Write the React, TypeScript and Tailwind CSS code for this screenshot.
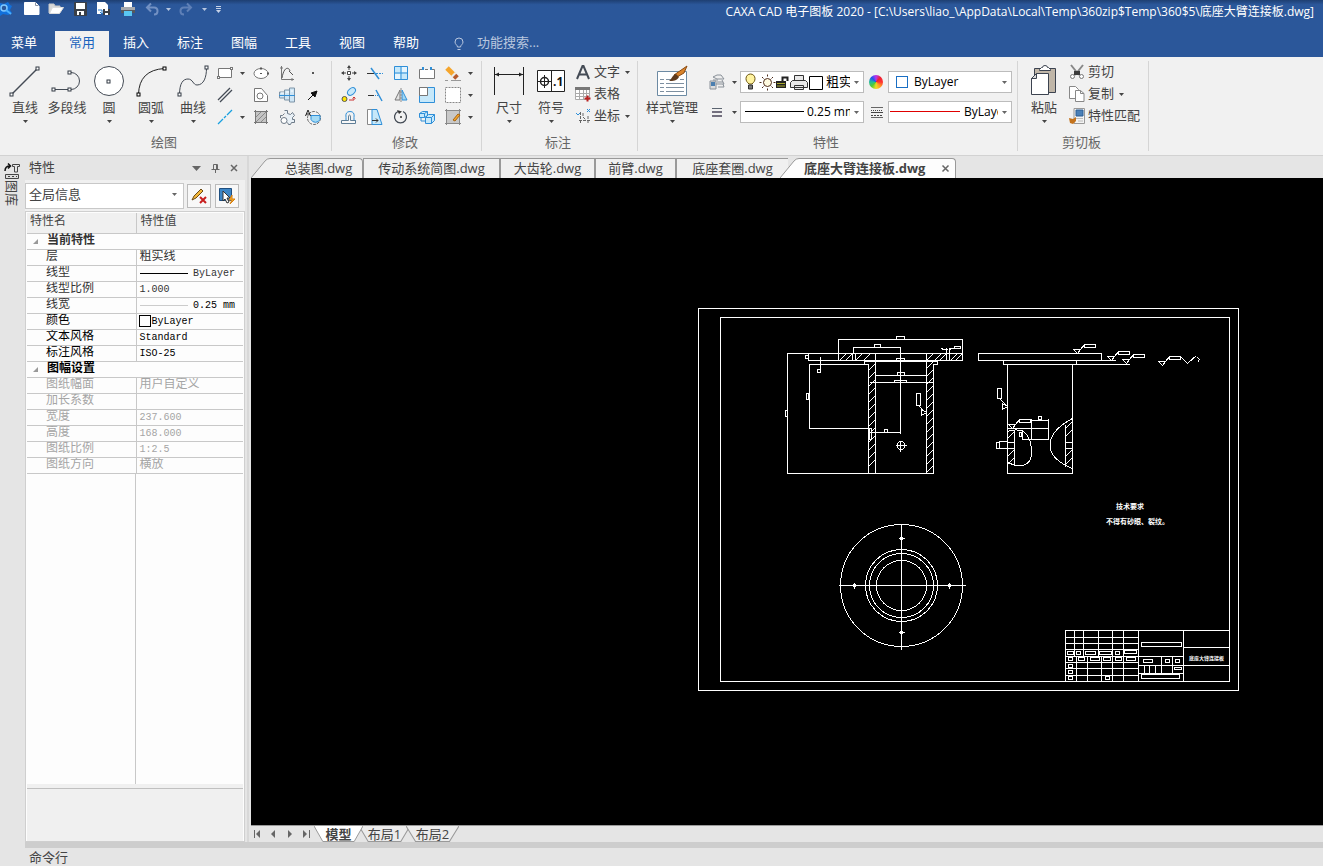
import React from 'react';

interface IconProps {
  w?: number;
  h?: number;
  children: React.ReactNode;
}

const Icon: React.FC<IconProps> = ({ w = 16, h = 16, children }) => (
  <svg width={w} height={h} viewBox={`0 0 ${w} ${h}`} fill="none" stroke="#5b6470" strokeWidth={1} className="shrink-0" aria-hidden="true">
    {children}
  </svg>
);

const Caret: React.FC<{ className?: string }> = ({ className = 'text-[#444]' }) => (
  <svg width="5" height="3" viewBox="0 0 5 3" className={`shrink-0 ${className}`} aria-hidden="true">
    <path d="M0 0h5L2.5 3z" fill="currentColor" />
  </svg>
);

// Square grip drawn at the ends of the sketch icons
const Grip: React.FC<{ x: number; y: number; c?: string }> = ({ x, y, c = '#333a45' }) => (
  <rect x={x - 1.5} y={y - 1.5} width="3" height="3" fill="#fff" stroke={c} />
);

/* ---------- quick access ---------- */

const quickItems = [
  { label: '新建', cell: 'w-6', icon: <Icon><path d="M.5 1.5h11l3.5 3.5v8.5H.5z" fill="#fff" stroke="#fff" /><path d="M11.5 1.5v3h3" stroke="#8a93a3" /></Icon> },
  { label: '打开', cell: 'w-6', icon: <Icon><path d="M1 12V3h5l1 2h5v2" fill="#d8d8d8" stroke="#c9c9c9" /><path d="M1.5 12.5l3-6h11l-4 6z" fill="#fff" stroke="#ddd" /></Icon> },
  { label: '保存', cell: 'w-6', icon: <Icon><path d="M2.5 1.5h12v13h-12z" fill="#3a3f47" stroke="#3a3f47" /><path d="M4 2h9v6H4zM5 10h7v4H5z" fill="#fff" stroke="none" /><path d="M7 11h2v3H7z" fill="#3a3f47" stroke="none" /></Icon> },
  { label: '另存为', cell: 'w-6', icon: <Icon><path d="M1 1h8l3 3v9H1z" fill="#fff" stroke="none" /><path d="M2 9h4v3M4 11l2 2 2-2" stroke="#2678c9" /><path d="M7 8h7v6H7z" fill="#3a3f47" stroke="none" /><path d="M9 8h3v2H9zM9 12h3v2H9z" fill="#fff" stroke="none" /></Icon> },
  { label: '打印', cell: 'w-6', icon: <Icon><path d="M4 1h8v5H4z" fill="#fff" stroke="none" /><path d="M1 6h14v6H1z" fill="#a6a9ad" stroke="none" /><path d="M1 9h14v3H1z" fill="#55585e" stroke="none" /><path d="M4 10h8v5H4z" fill="#59c6f2" stroke="none" /></Icon> },
  { label: '撤销', cell: 'w-6', icon: <Icon><path d="M3 6.5h7q3.500 0 3.500 3.500T10 13.5M7 2.500l-4 4 4 4" stroke="#7391c3" strokeWidth="2" /></Icon> },
  { label: '撤销列表', cell: 'w-2', icon: <Caret className="text-[#b7c6e0]" /> },
  { label: '重做', cell: 'w-7', icon: <Icon><path d="M13 6.5H6Q2.500 6.500 2.500 10T6 13.500M9 2.500l4 4-4 4" stroke="#5f80b7" strokeWidth="2" /></Icon> },
  { label: '重做列表', cell: 'w-2', icon: <Caret className="text-[#b7c6e0]" /> },
  { label: '自定义快速访问', cell: 'w-5', icon: <Icon w={7} h={8}><path d="M1 1.5h5M1 3.5h5" stroke="#c7d3e8" /><path d="M1 5h5L3.5 8z" fill="#c7d3e8" stroke="none" /></Icon> },
];

const TitleBar = () => (
  <header className="relative flex h-[31px] items-start bg-linear-to-b from-[#1e3f72] from-0% to-[#2b579a] to-15%">
    <span className="mt-px mr-2 shrink-0">
      <svg width="12" height="16" viewBox="0 0 12 16" aria-hidden="true">
        <path d="M0 2l4 1 4-2 2 3 2 1-2 4 2 3-4 2-5-1-3 2z" fill="#1170dc" />
        <circle cx="4" cy="7" r="3" fill="#2b579a" stroke="#7fc8ff" strokeWidth="1.5" />
        <path d="M6 9l5 4" stroke="#4ab0ff" strokeWidth="2" />
      </svg>
    </span>
    {quickItems.map(q => (
      <button key={q.label} aria-label={q.label} className={`flex h-[18px] shrink-0 items-center justify-center ${q.cell}`}>
        {q.icon}
      </button>
    ))}
    <h1 className="ml-auto h-6 pr-[9px] text-[12px] leading-6 whitespace-nowrap text-white">
      CAXA CAD 电子图板 2020 - [C:\Users\liao_\AppData\Local\Temp\360zip$Temp\360$5\底座大臂连接板.dwg]
    </h1>
  </header>
);

/* ---------- ribbon tabs ---------- */

const menuTabs = ['常用', '插入', '标注', '图幅', '工具', '视图', '帮助'];

const MenuTabs = () => (
  <nav className="flex h-[26px] items-stretch bg-[#2b579a] text-[13px] text-white">
    <button className="mr-[7px] w-12 pb-0.5">菜单</button>
    {menuTabs.map((t, i) => (
      <button key={t} className={`w-[54px] shrink-0 pb-0.5 ${i === 0 ? 'bg-[#f1f1f1] text-[#1964be]' : ''}`}>
        {t}
      </button>
    ))}
    <label className="ml-5 flex items-center">
      <Icon w={12} h={14}>
        <path d="M4.5 10C4.5 8 2 7.5 2 5a4 4 0 018 0c0 2.500-2.500 3-2.500 5zM4.5 12.5h3" stroke="#b9c7df" />
      </Icon>
      <input aria-label="功能搜索" placeholder="功能搜索..." className="ml-3 w-40 bg-transparent pb-0.5 text-[13px] outline-none placeholder:text-[#b9c7df]" />
    </label>
  </nav>
);

/* ---------- ribbon pieces ---------- */

const Group: React.FC<{ title: string; className?: string; inset: string; children: React.ReactNode }> = ({ title, className = '', inset, children }) => (
  <section className={`relative flex shrink-0 flex-col after:absolute after:top-1 after:right-0 after:bottom-1 after:w-px after:bg-[#d5d5d5] ${className}`}>
    <div className={`flex h-[75px] items-start ${inset}`}>{children}</div>
    <h2 className="pr-1 text-center text-[13px] leading-5 text-[#666]">{title}</h2>
  </section>
);

const BigButton: React.FC<{ label: string; caret?: boolean; className?: string; children: React.ReactNode }> = ({ label, caret = true, className = 'w-[42px]', children }) => (
  <button className={`flex shrink-0 flex-col items-center pt-2 text-[13px] leading-5 whitespace-nowrap text-[#444] ${className}`}>
    {children}
    <span className="mb-[3px]">{label}</span>
    {caret && <Caret />}
  </button>
);

const ToolGrid: React.FC<{ className: string; items: { label: string; icon: React.ReactNode }[] }> = ({ className, items }) => (
  <div className={`grid auto-rows-[22px] pt-[5px] ${className}`}>
    {items.map(it => (
      <button key={it.label} aria-label={it.label} className="flex items-center justify-center">
        {it.icon}
      </button>
    ))}
  </div>
);

const B = '#2f8fd8';

const drawTools = [
  { label: '矩形', icon: <Icon><path d="M1.5 3.5h13v9h-13z" fill="#fff" stroke="#777" /><path d="M13 2h3v3h-3zM0 11h3v3H0z" fill="#777" stroke="none" /><path d="M14 3h1v1h-1zM1 12h1v1H1z" fill="#fff" stroke="none" /></Icon> },
  { label: '矩形选项', icon: <Caret /> },
  { label: '椭圆', icon: <Icon><ellipse cx="8" cy="8.5" rx="7" ry="5" fill="#fff" stroke="#777" /><path d="M7 8h2v1H7zM14 7.500h2v2h-2zM7 2.500h2v2H7z" fill="#555" stroke="none" /></Icon> },
  { label: '公式曲线', icon: <Icon><path d="M2.5 1v13.5H15M1 3h3M13 13v3" stroke="#777" /><path d="M3 13C5 1 10 2 11 6M10 6l4 4" stroke="#555" /></Icon> },
  { label: '点', icon: <Icon><path d="M7 7h2v2H7z" fill="#555" stroke="none" /></Icon> },
  { label: '平行线', icon: <Icon><path d="M1 13L13 1M3 15L15 3" stroke="#444b55" strokeWidth="1.3" /></Icon> },
  { label: '平行线选项', icon: null },
  { label: '局部放大', icon: <Icon><path d="M1.5 1.5h7l6 7v6h-13z" fill="#fff" stroke="#777" /><circle cx="7" cy="9" r="3" stroke="#777" /></Icon> },
  { label: '轴', icon: <Icon><path d="M.5 5h5v6h-5zM5.500 3h5v10h-5zM10.500 1h5v14h-5z" fill="#cfe6f5" stroke="#7d93a6" /><path d="M2 6h3M7 5h3M12 4h2" stroke="#fff" /><path d="M0 8.5h16" stroke={B} /></Icon> },
  { label: '箭头', icon: <Icon><path d="M3 13l5-5" stroke="#111" /><path d="M12 4l-2 6-4-4z" fill="#111" stroke="#111" /></Icon> },
  { label: '中心线', icon: <Icon><path d="M1 15l5-5M7 9l2-2M10 6l5-5" stroke="#18a0e0" strokeWidth="1.3" /></Icon> },
  { label: '中心线选项', icon: <Caret /> },
  { label: '剖面线', icon: <Icon><path d="M3 3h10v10H3z" fill="#c4c4c4" stroke="none" /><path d="M3 8l5-5M3 13L13 3M8 13l5-5" stroke="#8a8a8a" /><path d="M2.5 1v14M13.5 1v14M1 2.5h14M1 13.5h14" stroke="#777" /></Icon> },
  { label: '齿轮', icon: <Icon><path d="M5.500 1.500h3v3l3 1 2-2 2 3-2 2v2h2v3h-3l-1 2h-2l-1-2M1.500 9V6.500h2l2-2" fill="#e8f0f6" stroke="#6d7a88" /><circle cx="5" cy="11.500" r="3" fill="#fff" stroke="#6d7a88" /></Icon> },
  { label: '局部视图', icon: <Icon><circle cx="9" cy="9" r="6.5" stroke="#666" strokeDasharray="3 1" /><path d="M6 6.500h9v4a5 5 0 01-9 0z" fill="#a5dbf5" stroke={B} /><path d="M.5 7L3 1l2.500 6M1 5h4" stroke="#222" /></Icon> },
];

const editTools = [
  { label: '平移', icon: <Icon><path d="M8 1v4M8 11v4M1 8h4M11 8h4" stroke="#444" /><path d="M6.5 6.5h3v3h-3z" fill="#fff" stroke="#444" /><path d="M8 0l2 3H6zM8 16l-2-3h4zM0 8l3-2v4zM16 8l-3 2V6z" fill="#444" stroke="none" /></Icon> },
  { label: '裁剪', icon: <Icon><path d="M0 8.5h7" stroke="#333" /><path d="M9 8.5h7" stroke={B} strokeDasharray="2 1" /><path d="M4 3l8 11" stroke={B} strokeWidth="1.5" /></Icon> },
  { label: '阵列', icon: <Icon><path d="M1.5 1.5h13v13h-13z" fill="#c6e8fa" stroke={B} /><path d="M8 1v14M1 8h14" stroke={B} /><path d="M9 2h5v5H9zM2 9h5v5H2z" fill="#e6f5fd" stroke="none" /></Icon> },
  { label: '打断', icon: <Icon><path d="M4 4.500H.5v9h15v-9H12M6 4.500h3" fill="#fff" stroke="#777" /><path d="M3 2h2v3H3zM11 2h2v3h-2z" fill={B} stroke="none" /></Icon> },
  { label: '删除', icon: <Icon><path d="M2 3l7 7" stroke="#f5a52c" strokeWidth="5" /><path d="M8 9l1.500 1.500" stroke="#ececec" strokeWidth="5" /><path d="M9.500 10.500l2.500 2.500" stroke="#b55a2c" strokeWidth="5" /><path d="M0 15.500h3M6 15.500h10" stroke="#999" /></Icon> },
  { label: '删除选项', icon: <Caret /> },
  { label: '平移复制', icon: <Icon><circle cx="3.500" cy="12" r="2.5" fill="#ffe600" stroke="#555" /><ellipse cx="10.500" cy="4.500" rx="4.500" ry="3" transform="rotate(-40 10.500 4.500)" fill="#c6e8fa" stroke={B} /><path d="M8 13h5v-3M11.500 11.500l1.500-1.500 1.500 1.500" stroke="#c33" /></Icon> },
  { label: '延伸', icon: <Icon><path d="M1 8.5h6" stroke="#333" /><path d="M8 8.5h4" stroke={B} strokeDasharray="1 1" /><path d="M9 3l6 11" stroke={B} strokeWidth="1.5" /></Icon> },
  { label: '镜像', icon: <Icon><path d="M7 3v10H2z" fill="#e2e2e2" stroke="#777" /><path d="M9 3v10h5z" fill="#9fd5f2" stroke={B} /><path d="M8 1v14" stroke="#888" strokeDasharray="2 1" /></Icon> },
  { label: '缩放', icon: <Icon><path d="M.5.5h15v15H.5z" fill="#c6e8fa" stroke={B} /><path d="M.5.5h8v8h-8z" fill="#fff" stroke="#777" /></Icon> },
  { label: '选择框', icon: <Icon><path d="M.5.5h15v15H.5z" fill="#fff" stroke="#888" strokeDasharray="2 1" /></Icon> },
  { label: '选择框选项', icon: <Caret /> },
  { label: '等距线', icon: <Icon><path d="M1 11.500h4V8.500q-1-6 4-6t4 6v3h2" stroke={B} /><path d="M.5 14.500h14v-3h-5V8q0-2-1-2t-1 2v3.500h-7z" fill="#f8f8f8" stroke="#5e7d96" /></Icon> },
  { label: '拉伸', icon: <Icon><path d="M.5.5h9v15h-9z" fill="#fff" stroke="#888" /><path d="M5 .5h5l5 15H5z" fill="#c6e8fa" stroke={B} /><path d="M5 11.500h6M9 9.500l2 2-2 2" stroke="#333" /></Icon> },
  { label: '旋转', icon: <Icon><path d="M10 2.500A6 6 0 115 2.500" stroke="#444b55" strokeWidth="1.3" /><path d="M4 1l5 1.500L6 5z" fill="#333" stroke="none" /><circle cx="8" cy="8" r="1" fill="#333" stroke="none" /></Icon> },
  { label: '阵列三维', icon: <Icon><path d="M.5 4.500l3-2h5v4l-3 2h-5zM6.500 8.500l3-3h6v6l-3 3h-6z" fill="#c6e8fa" stroke={B} /><path d="M6.500 8.500h6v6M12.500 8.500l3-3M.5 4.500h5v4M5.500 4.500l3-2M2 9v3h4" stroke={B} /></Icon> },
  { label: '填充编辑', icon: <Icon><path d="M2 2h12v12H2z" fill="#c8c8c8" stroke="none" /><path d="M1.5 0v16M14.5 0v16M0 1.5h16M0 14.5h16" stroke="#888" /><path d="M8 11l5-6 2 1-5 6z" fill="#f5a52c" stroke="#a66512" /></Icon> },
  { label: '填充选项', icon: <Caret /> },
];

const RowButton: React.FC<{ label: string; caret?: boolean; children: React.ReactNode }> = ({ label, caret, children }) => (
  <button className="flex h-[22px] items-center text-[13px] whitespace-nowrap text-[#444]">
    {children}
    <span className="ml-[3px]">{label}</span>
    {caret && <Caret className="ml-[5px] text-[#444]" />}
  </button>
);

const Combo: React.FC<{ label: string; value: string; selectClass?: string; children?: React.ReactNode }> = ({ label, value, selectClass = '', children }) => (
  <label className="flex h-[22px] w-[124px] items-center border border-[#bcbcbc] bg-white text-[12px] text-black">
    {children}
    <select aria-label={label} className={`min-w-0 flex-1 appearance-none overflow-hidden bg-transparent outline-none ${selectClass}`}>
      <option>{value}</option>
    </select>
    <Caret className="mr-1 ml-1 text-[#666]" />
  </label>
);

const DrawGroup = () => (
  <Group title="绘图" className="w-[332px]" inset="pl-1">
    <BigButton label="直线">
      <Icon w={32} h={32}><path d="M3 29L29 3" stroke="#444b55" strokeWidth="1.5" /><Grip x={2.5} y={29.5} /><Grip x={28.5} y={3.5} /></Icon>
    </BigButton>
    <BigButton label="多段线" caret={false}>
      <Icon w={32} h={32}><path d="M2 24.5h18a8.500 8.500 0 000-17h-2" stroke="#444b55" /><Grip x={2.5} y={24.5} /><Grip x={18.5} y={24.5} /><Grip x={18.5} y={7.5} /></Icon>
    </BigButton>
    <BigButton label="圆">
      <Icon w={32} h={32}><circle cx="16" cy="16" r="14.5" fill="#fff" stroke="#444b55" /><Grip x={15.5} y={16.5} /></Icon>
    </BigButton>
    <BigButton label="圆弧">
      <Icon w={32} h={32}><path d="M3.5 29.5Q4 5 29.5 3.5" stroke="#222" /><Grip x={3.5} y={29.5} c="#000" /><Grip x={29.5} y={3.5} c="#000" /></Icon>
    </BigButton>
    <BigButton label="曲线">
      <Icon w={32} h={32}><path d="M2.5 30C2.5 18 6 14 11 14s5 6 9 6c7 0 9.500-8 9.500-17" stroke="#444b55" /><Grip x={2.5} y={29.5} /><Grip x={29.5} y={2.5} /></Icon>
    </BigButton>
    <ToolGrid className="grid-cols-[22px_12px_26px_26px_26px]" items={drawTools} />
  </Group>
);

const EditGroup = () => (
  <Group title="修改" className="w-[150px]" inset="pl-1">
    <ToolGrid className="grid-cols-[26px_26px_26px_26px_26px_8px]" items={editTools} />
  </Group>
);

const AnnotateGroup = () => (
  <Group title="标注" className="w-[156px]" inset="pl-[6px]">
    <BigButton label="尺寸">
      <Icon w={32} h={32}><path d="M1.5 2v28M30.5 2v28M2 9.5h28" stroke="#222" /><path d="M2 9.5l4-2v4zM30 9.5l-4-2v4z" fill="#222" stroke="none" /></Icon>
    </BigButton>
    <BigButton label="符号">
      <svg width="30" height="32" viewBox="0 0 30 32" className="shrink-0" aria-hidden="true">
        <path d="M1.5 5.5h27v21h-27zM15.5 5v22" fill="#fff" stroke="#222" />
        <circle cx="8.5" cy="16.5" r="4" fill="none" stroke="#222" strokeWidth="1.5" />
        <path d="M2 16.5h13M8.5 10v13" stroke="#222" />
        <text x="17" y="21" fontSize="12" fontWeight="700" fill="#111">.1</text>
      </svg>
    </BigButton>
    <div className="flex flex-col pt-1 pl-[3px]">
      <RowButton label="文字" caret><Icon><path d="M2 15L7.5 2h1L14 15M4.5 10.5h7" stroke="#444b55" strokeWidth="2" /></Icon></RowButton>
      <RowButton label="表格"><Icon><path d="M.5 1.5h14v12H.5zM.5 7.500h14M.5 10.500h14M4.5 4v10M8.5 4v10M11.500 4v10" fill="#fff" stroke="#aaa" /><path d="M0 1h15v3H0z" fill="#777" stroke="none" /><path d="M12.5 9.500v6M9.500 12.5h6" stroke="#b22" strokeWidth="2" /></Icon></RowButton>
      <RowButton label="坐标" caret><Icon><path d="M5.5 4v12M4 12.5h12M8 5v4l3 3M13 8v8" stroke="#666" strokeDasharray="3 1" /><path d="M1 5l2 2 2-2M12 1l3 3M15 1l-3 3" stroke={B} /></Icon></RowButton>
    </div>
  </Group>
);

const PropsGroup = () => (
  <Group title="特性" className="w-[380px]" inset="pl-[6px]">
    <BigButton label="样式管理" className="w-14">
      <Icon w={32} h={32}>
        <path d="M1.5 6.5h29v24h-29z" fill="#fff" stroke="#6c8aa3" />
        <path d="M4 14.5h4M4 18.5h4M4 22.5h4M4 26.5h4M10 14.5h6M10 18.5h18M10 22.5h18M10 26.5h18M24 14.5h4" stroke="#7d8fa0" />
        <path d="M31 1l-3 7-7 4-3-2z" fill="#d9832b" stroke="#8c4c12" />
        <path d="M20 9l3 3c-2 4-6 4-10 4 3-2 3-6 7-7z" fill="#5e3a1d" stroke="none" />
      </Icon>
    </BigButton>
    <div className="ml-[9px] flex flex-col gap-2 pt-[14px]">
      <button aria-label="图层" className="flex h-[22px] items-center gap-[7px]">
        <Icon><path d="M4 3l4-2h4l3 4H8zM4 6h5M7 10h8l-2-4M8 8h6M9 13h6l-1-3" fill="#eee" stroke="#8a9199" /><path d="M1 7h6v8H1z" fill="#ddd" stroke="#8a9199" /><path d="M2 8h4v4H2z" fill="#4b7fb0" stroke="none" /></Icon>
        <Caret />
      </button>
      <button aria-label="线宽" className="flex h-[22px] items-center gap-[7px]">
        <Icon><path d="M3 4.5h10" /><path d="M3 8h10M3 12h10" stroke="#4a4458" strokeWidth="1.5" /></Icon>
        <Caret />
      </button>
    </div>
    <div className="ml-[3px] flex flex-col gap-2 pt-[14px]">
      <Combo label="当前层" value="粗实线" selectClass="text-[13px]">
        <svg width="85" height="20" viewBox="0 0 85 20" fill="none" className="shrink-0" aria-hidden="true">
          <path d="M8 12C6 10 5 9 5 6.5a4.500 4.500 0 019 0c0 2.500-1 3.500-3 5.500z" fill="#fff3a0" stroke="#6b5410" />
          <path d="M7.5 13h4v4h-4z" fill="#777" stroke="#333" />
          <circle cx="26.5" cy="10.5" r="4" fill="#fffbe0" stroke="#4b2a1a" />
          <path d="M26.5 2.5v2M26.5 16.5v2M18.5 10.5h2M32.5 10.5h2M21 5l1.500 1.500M30.500 14.500L32 16M21 16l1.500-1.500M30.500 6.500L32 5" stroke="#4b2a1a" />
          <path d="M35 9h10v7H35z" fill="#222" /><path d="M36 11.5h8M36 14h8" stroke="#a7a72c" /><path d="M41.5 9V5.5h5V9" stroke="#222" strokeWidth="2" />
          <path d="M53.5 8V3.5h9V8M51.5 8.5h13l2 2v5h-17v-5zM53.5 13.5h9v4h-9z" fill="#e8e8e8" stroke="#333" />
          <path d="M68.5 4.5h13v13h-13z" fill="#fff" stroke="#000" />
        </svg>
      </Combo>
      <Combo label="线宽" value="0.25 mm" selectClass="ml-[3px]">
        <svg width="59" height="2" className="ml-1 shrink-0" aria-hidden="true"><path d="M0 0h59v1H0z" fill="#000" /></svg>
      </Combo>
    </div>
    <div className="flex w-6 flex-col items-center gap-2 pt-[14px]">
      <button aria-label="颜色" className="flex h-[22px] items-center">
        <span className="size-[14px] rounded-full bg-[conic-gradient(#b3e,#e23,#f33,#f92,#ed2,#5c3,#2b9,#25e,#b3e)]" />
      </button>
      <button aria-label="线型" className="flex h-[22px] items-center">
        <Icon w={13} h={13}><path d="M1 1.5h12" stroke="#666" /><path d="M1 4.5h12" stroke="#444" strokeDasharray="1 1" /><path d="M1 6.5h12" stroke="#444" /><path d="M1 9.5h12" stroke="#444" strokeDasharray="2 1" /><path d="M1 11.5h12" stroke="#666" /></Icon>
      </button>
    </div>
    <div className="flex flex-col gap-2 pt-[14px]">
      <Combo label="颜色" value="ByLayer" selectClass="ml-[6px]">
        <span className="ml-[7px] size-3 shrink-0 border border-[#1a6fc4] bg-white" />
      </Combo>
      <Combo label="线型" value="ByLayer" selectClass="ml-1">
        <svg width="70" height="2" className="ml-px shrink-0" aria-hidden="true"><path d="M0 0h70v1H0z" fill="#e00000" /></svg>
      </Combo>
    </div>
  </Group>
);

const ClipGroup = () => (
  <Group title="剪切板" className="w-[131px]" inset="pl-[5px]">
    <BigButton label="粘贴">
      <Icon w={32} h={32}>
        <path d="M6.5 3.5h21v24h-21z" fill="#c0b6a8" stroke="#3c4350" />
        <path d="M11.5 4.5l2-2h1q0-2 2.500-2t2.500 2h1l2 2v1h-11z" fill="#fff" stroke="#3c4350" />
        <path d="M8.5 8.5h12v21h-17v-16z" fill="#fff" stroke="#3c4350" />
        <path d="M3.5 13.5h5v-5z" fill="#ddd" stroke="#3c4350" />
      </Icon>
    </BigButton>
    <div className="flex flex-col pt-1 pl-1">
      <RowButton label="剪切"><Icon><path d="M2 1l8 10M14 1L6 11" stroke="#888" strokeWidth="2" /><path d="M5 7h6v4H5z" fill="#3c3c3c" stroke="none" /><circle cx="3.5" cy="12.5" r="2" stroke="#777" fill="#fff" /><circle cx="12.5" cy="12.5" r="2" stroke="#777" fill="#fff" /></Icon></RowButton>
      <RowButton label="复制" caret><Icon><path d="M.5.5h6l3 3v9h-9z" fill="#fff" stroke="#888" /><path d="M6.5 4.5h5l3.500 3v8H6.5z" fill="#fff" stroke="#888" /><path d="M11.5 4.5v3H15" stroke="#888" /></Icon></RowButton>
      <RowButton label="特性匹配"><Icon><path d="M5 .5h10.500v15H5z" fill="#f3f3f3" stroke="#999" /><path d="M7 2h7v6H7z" fill="#4a80b8" stroke="#2d5f94" /><path d="M7 10.5h7M9 13h5" stroke="#bbb" /><path d="M0 10l4 1 3-2v4l-3 3-3-1z" fill="#c4731d" stroke="none" /></Icon></RowButton>
    </div>
  </Group>
);

/* ---------- property palette ---------- */

type PropRow = { name: string; value?: React.ReactNode; head?: boolean; tone: string };

const dark = 'text-[#333]';
const black = 'text-black';
const faint = 'text-[#a5a5a5]';

const propRows: PropRow[] = [
  { name: '当前特性', head: true, tone: dark },
  { name: '层', value: '粗实线', tone: dark },
  { name: '线型', value: <span className="flex items-center justify-between pr-2"><span className="h-px w-12 bg-black" /><span>ByLayer</span></span>, tone: dark },
  { name: '线型比例', value: '1.000', tone: dark },
  { name: '线宽', value: <span className="flex items-center justify-between pr-2 text-black"><span className="h-px w-12 bg-[#ccc]" /><span>0.25 mm</span></span>, tone: dark },
  { name: '颜色', value: <span className="flex items-center"><span className="mr-px -ml-px size-3 border border-black" />ByLayer</span>, tone: black },
  { name: '文本风格', value: 'Standard', tone: black },
  { name: '标注风格', value: 'ISO-25', tone: black },
  { name: '图幅设置', head: true, tone: black },
  { name: '图纸幅面', value: '用户自定义', tone: faint },
  { name: '加长系数', value: '', tone: faint },
  { name: '宽度', value: '237.600', tone: faint },
  { name: '高度', value: '168.000', tone: faint },
  { name: '图纸比例', value: '1:2.5', tone: faint },
  { name: '图纸方向', value: '横放', tone: faint },
];

const PropertyPanel = () => (
  <aside className="flex w-[220px] shrink-0 flex-col">
    <div className="flex h-6 items-center pr-px pl-1 text-[13px] text-[#444]">
      <h2 className="flex-1">特性</h2>
      <button aria-label="菜单" className="flex w-5 justify-center"><Icon w={9} h={5}><path d="M0 0h9L4.5 5z" fill="#666" stroke="none" /></Icon></button>
      <button aria-label="固定" className="flex w-[18px] justify-center"><Icon w={9} h={10}><path d="M2.5 6V1.5h4V6M.5 6.5h8M4.5 7v3M5.5 2v4" stroke="#666" /></Icon></button>
      <button aria-label="关闭" className="flex w-5 justify-center"><Icon w={8} h={8}><path d="M1 1l6 6M7 1L1 7" stroke="#666" strokeWidth="1.5" /></Icon></button>
    </div>
    <div className="flex h-[31px] items-center gap-[3px] bg-[#f0f0f0] pr-[6px]">
      <label className="flex h-[26px] min-w-0 flex-1 items-center border border-[#c8c8c8] bg-white pr-[6px] pb-0.5 pl-[3px]">
        <select aria-label="对象" className="min-w-0 flex-1 appearance-none text-[13px] text-[#444] outline-none">
          <option>全局信息</option>
        </select>
        <Caret className="text-[#666]" />
      </label>
      <button aria-label="取消编辑" className="flex size-6 items-center justify-center border border-[#bbb] bg-[#f8f8f8]">
        <Icon w={18} h={18}><path d="M2 13l2-4 7-7 2 2-7 7z" fill="#f3b73b" stroke="#6b4a14" /><path d="M10 10l6 6M16 10l-6 6" stroke="#c81e1e" strokeWidth="2" /></Icon>
      </button>
      <button aria-label="快速选择" className="ml-px flex size-6 items-center justify-center border border-[#bbb] bg-[#f8f8f8]">
        <Icon w={18} h={18}><path d="M1.5 1.5h12v12h-12z" fill="#3d86c6" stroke="#1f4f80" /><path d="M5 4v10l2-2 2 4 2-1-2-4h3z" fill="#fff" stroke="#333" /><path d="M14 8l-3 5h3l-2 4 5-5h-3z" fill="#f7b22c" stroke="#d67f10" /></Icon>
      </button>
    </div>
    <div className="flex min-h-0 flex-1 flex-col border border-[#cfcfcf] bg-[#fdfdfd] px-px pt-px font-['Liberation_Mono','Noto_Sans_CJK_SC',monospace] text-[12px]">
      <table className="w-full table-fixed border-collapse text-left">
        <thead>
          <tr className="h-5 bg-[#f0f0f0] text-[#444]">
            <th className="w-[109px] border-r border-b border-[#c8c8c8] p-0 pl-[3px] leading-[19px] font-normal">特性名</th>
            <th className="border-b border-[#c8c8c8] p-0 pl-1 leading-[19px] font-normal">特性值</th>
          </tr>
        </thead>
        <tbody>
          {propRows.map(r =>
            r.head ? (
              <tr key={r.name} className={`h-4 border-b border-[#c8c8c8] ${r.tone}`}>
                <th colSpan={2} className="p-0 leading-[15px] font-bold">
                  <span className="flex items-center">
                    <svg width="5" height="5" className="mr-[9px] ml-[6px]" aria-hidden="true"><path d="M5 0v5H0z" fill="#999" /></svg>
                    {r.name}
                  </span>
                </th>
              </tr>
            ) : (
              <tr key={r.name} className={`h-4 border-b border-[#c8c8c8] ${r.tone}`}>
                <td className="overflow-hidden border-r border-[#c8c8c8] p-0 pl-[19px] leading-[15px] whitespace-nowrap">{r.name}</td>
                <td className={`overflow-hidden p-0 pl-[3px] leading-[15px] whitespace-nowrap ${/[0-9A-Z]/.test(String(r.value)) || typeof r.value === 'object' ? 'text-[10px]' : ''}`}>{r.value}</td>
              </tr>
            ),
          )}
        </tbody>
      </table>
      <div className="w-[109px] flex-1 border-r border-[#c8c8c8]" />
      <div className="h-[57px] shrink-0 border-t-4 border-[#f0f0f0] bg-[#f0f0f0]">
        <div className="h-full border-t border-[#c0c0c0]" />
      </div>
    </div>
  </aside>
);

/* ---------- document tabs ---------- */

const docs = [
  { name: '总装图.dwg', cls: 'w-[92px] border-r pl-1' },
  { name: '传动系统简图.dwg', cls: 'w-[137px] border-x' },
  { name: '大齿轮.dwg', cls: 'w-[95px] border-x' },
  { name: '前臂.dwg', cls: 'w-[81px] border-x' },
  { name: '底座套圈.dwg', cls: 'w-[112px] border-l' },
];

const DocTabs = () => (
  <div className="flex h-[22px] items-end text-[13px] text-[#444]">
    <svg width="20" height="20" viewBox="0 0 20 20" className="shrink-0" aria-hidden="true">
      <path d="M0 20L14 3q2-2.500 5-2.500h1V20z" fill="#f0f0f0" /><path d="M0 20L14 3q2-2.500 5-2.500h1" fill="none" stroke="#999" />
    </svg>
    {docs.map(d => (
      <button key={d.name} className={`h-5 shrink-0 border-t border-[#999] bg-[#f0f0f0] pb-px leading-[18px] whitespace-nowrap first-of-type:rounded-tr-sm ${d.cls}`}>
        {d.name}
      </button>
    ))}
    <svg width="20" height="20" viewBox="0 0 20 20" className="relative -ml-2 shrink-0" aria-hidden="true">
      <path d="M0 20L14 3q2-2.500 5-2.500h1V20z" fill="#fdfdfd" /><path d="M0 20L14 3q2-2.500 5-2.500h1" fill="none" stroke="#999" />
    </svg>
    <div className="flex h-5 w-[156px] shrink-0 items-center rounded-tr-sm border-t border-r border-[#999] bg-[#fdfdfd]">
      <button className="flex-1 pb-px pl-1 text-left leading-[18px] font-bold whitespace-nowrap">底座大臂连接板.dwg</button>
      <button aria-label="关闭文件" className="mr-[5px]"><Icon w={9} h={9}><path d="M1.500 1.500l6 6M7.500 1.500l-6 6" stroke="#666" strokeWidth="1.5" /></Icon></button>
    </div>
  </div>
);

/* ---------- drawing ---------- */

// Surface finish mark: triangle standing on (x, y) with its value box
const Finish: React.FC<{ x: number; y: number }> = ({ x, y }) => (
  <path d={`M${x} ${y}l-4-4h7zM${x + 3} ${y - 4}l4-5h11v3h-11v-3`} />
);

const Bolt: React.FC<{ x: number; y: number }> = ({ x, y }) => (
  <g>
    <circle cx={x} cy={y} r="1.5" />
    <path d={`M${x - 3} ${y}h6M${x} ${y - 3}v6`} />
  </g>
);

// [x, y, width, height] of the value boxes in the title block
const blockBoxes = [
  [1067, 651, 6, 3], [1076, 651, 4, 3], [1085, 651, 10, 3], [1099, 651, 12, 3], [1115, 651, 4, 3], [1124, 650, 12, 3],
  [1068, 657, 4, 3], [1078, 657, 6, 3], [1090, 657, 9, 3], [1103, 657, 7, 3], [1115, 657, 6, 3], [1126, 657, 9, 3],
  [1068, 664, 4, 3], [1068, 670, 4, 3], [1068, 676, 4, 3], [1105, 676, 4, 3],
  [1141, 642, 40, 4], [1143, 659, 9, 3], [1165, 659, 4, 3], [1175, 659, 4, 3], [1174, 667, 7, 2], [1141, 674, 38, 4],
];

const dimBoxes = [
  [785, 410, 2, 6], [896, 336, 8, 3], [874, 344, 6, 3], [805, 355, 3, 3], [817, 369, 3, 3], [806, 393, 2, 6],
  [897, 372, 7, 3], [894, 380, 12, 2], [896, 358, 8, 3], [884, 429, 3, 3], [869, 428, 2, 11], [916, 393, 4, 12], [954, 346, 6, 2],
  [997, 388, 4, 10], [1038, 416, 3, 3], [1019, 432, 2, 4], [996, 442, 3, 6], [999, 441, 8, 7],
];

// Section lines of one wall, x0..x0+7, stepping down from y0 to y1
const wallHatch = (x0: number, y0: number, y1: number) => {
  let d = '';
  for (let y = y0 + 8; y <= y1; y += 8) d += `M${x0} ${y}l7-7`;
  return d;
};

// Section lines of the flange, between y 353 and 360
const flangeHatch = (xs: number[]) => xs.map(x => `M${x} 360l7-7`).join('');

const Drawing = () => (
  <svg viewBox="251 178 1072 647" className="block h-full w-full" role="img" aria-label="底座大臂连接板">
    <g transform="translate(0.5 0.5)" fill="none" stroke="#fff" shapeRendering="crispEdges">
      {/* sheet frame */}
      <path d="M698 308h540v382H698zM720 317h509v364H720z" />

      {/* hatched sections */}
      <path d={flangeHatch([839, 845, 855, 863, 926, 934, 939, 950, 955])} />
      <path d={wallHatch(868, 362, 473)} />
      <path d={wallHatch(926, 360, 473)} />
      <path d={`${wallHatch(1007, 430, 442)}${wallHatch(1007, 448, 464)}${wallHatch(1065, 420, 442)}${wallHatch(1065, 448, 466)}`} />

      {/* front section */}
      <path d="M787 353v120M786 353h176v7H864M786 473h147M808 353v7h56v4M808 364h60v109M864 361h73v3h-4v109" />
      <path d="M809 364v64M808 428h62M875 353v120M926 353v120M875 375h51M869 382h63M871 432h29M900 346v87M820 356v14" />
      <path d="M838 338v22M962 338v22M838 339h124M853 353v-6h47M852 353v7M855 353v7M941 348l2 1h4M946 347v13M949 347v13M949 349l2-1h9" />
      <circle cx="900.5" cy="445" r="4" />
      <path d="M895 445h11M900 440v11M918 405l7 7M921 409v6l5-3z" />

      {/* side section */}
      <path d="M978 353h123v7H978zM1003 360v4h126M1076 360v4M1076 360h39M1007 364v109h65V364" />
      <path d="M1007 428h41M1031 418v21M1048 418v21M1031 420h17M1021 439h27M1022 429v10M1014 431v34M1007 442h7M1007 448h7M1065 424v42M1065 442h7M1065 448h7" />
      <path d="M1007 431C1025 425 1031 437 1031 452C1031 466 1020 468 1007 462M1072 418C1042 434 1042 456 1072 468" />
      <path d="M999 398l8 8M1002 403v6l5-3zM1181 357l6 6 9-8M1197 357l2 2-2 3" />
      <Finish x={1077} y={353} />
      <Finish x={1111} y={360} />
      <Finish x={1126} y={363} />
      <Finish x={1162} y={365} />
      <Finish x={1012} y={428} />

      {/* top view */}
      <circle cx="901" cy="585" r="61" />
      <circle cx="901" cy="585" r="36" />
      <circle cx="901" cy="585" r="32" />
      <circle cx="901" cy="585" r="25" />
      <path d="M838 585h127M901 523v126" />
      <Bolt x={854} y={585} />
      <Bolt x={949} y={585} />
      <Bolt x={901} y={538} />
      <Bolt x={901} y={632} />

      {/* title block */}
      <path d="M1229 630h-164v51M1138 630v51M1183 630v51M1065 637h73M1065 643h73M1065 649h73M1065 656h118M1065 662h73M1065 668h73M1065 675h73" />
      <path d="M1074 630v26M1083 630v26M1098 630v26M1112 630v51M1123 630v51M1076 656v25M1087 656v25M1101 656v25" />
      <path d="M1161 656v17M1172 656v17M1138 665h45M1144 665v8M1149 665v8M1155 665v8M1138 673h45M1183 647h46M1183 665h46" />
      {[...dimBoxes, ...blockBoxes].map(([x, y, w, h]) => (
        <rect key={`${x}-${y}`} x={x} y={y} width={w} height={h} />
      ))}
    </g>
    <g fill="#fff" fontWeight="700">
      <text x="1116" y="509" fontSize="7">技术要求</text>
      <text x="1106" y="524" fontSize="7">不得有砂眼、裂纹。</text>
      <text x="1189" y="660" fontSize="5">底座大臂连接板</text>
    </g>
  </svg>
);

/* ---------- layout tabs ---------- */

const layoutTabs = [
  { name: '模型', active: true, w: 'w-[49px]' },
  { name: '布局1', active: false, w: 'w-[51px] -ml-1' },
  { name: '布局2', active: false, w: 'w-[53px] -ml-1' },
];

const scrollPaths = [
  { label: '第一个', d: 'M1 0h1v8H1zM7 0v8L3 4z' },
  { label: '上一个', d: 'M6 0v8L2 4z' },
  { label: '下一个', d: 'M2 0v8l4-4z' },
  { label: '最后一个', d: 'M1 0v8l4-4zM7 0h1v8H7z' },
];

const LayoutTabs = () => (
  <div className="flex h-[17px] shrink-0 items-start border-t border-[#999] bg-[#e5e5e5] text-[13px] text-[#444]">
    <div className="flex w-[63px] justify-between pr-1 pl-0.5">
      {scrollPaths.map(s => (
        <button key={s.label} aria-label={s.label} className="flex h-4 items-center justify-center">
          <svg width="8" height="8" viewBox="0 0 8 8" aria-hidden="true"><path d={s.d} fill="#666" /></svg>
        </button>
      ))}
    </div>
    {layoutTabs.map((t, i) => (
      <button key={t.name} className={`relative h-4 shrink-0 ${t.w} ${i === 0 ? 'z-10' : ''}`}>
        <svg viewBox="0 0 50 16" preserveAspectRatio="none" className="absolute inset-0 h-full w-full" aria-hidden="true">
          <path d="M0 0l9 15.500h32L50 0" fill={t.active ? '#fff' : '#ececec'} stroke="#999" />
        </svg>
        <span className={`relative block leading-[14px] ${t.active ? 'font-bold' : ''}`}>{t.name}</span>
      </button>
    ))}
  </div>
);

/* ---------- app ---------- */

export default function App() {
  return (
    <div className="flex h-screen flex-col overflow-hidden bg-[#e5e5e5] font-['Open_Sans','Noto_Sans_CJK_SC',sans-serif]">
      <TitleBar />
      <MenuTabs />
      <div className="flex h-[99px] shrink-0 border-b border-[#d2d2d2] bg-[#f1f1f1]">
        <DrawGroup />
        <EditGroup />
        <AnnotateGroup />
        <PropsGroup />
        <ClipGroup />
      </div>

      <div className="flex min-h-0 flex-1">
        <div className="w-[25px] shrink-0">
          <button className="mt-[7px] ml-1 flex flex-col items-center text-[13px] leading-4 text-[#444]">
            <Icon w={16} h={16}>
              <path d="M1 8c0-4 2-5 5-5M4 .5L6.500 3 4 5.500" stroke="#111" strokeWidth="1.5" />
              <path d="M8.500 1.500h7v2h-2V9h-3V3.500h-2z" stroke="#444" />
              <path d="M1.5 11.5h13v4h-13z" fill="#ddd" stroke="#444" /><path d="M4 13.5h2M8 13.5h2M12 13.5h1" stroke="#444" />
            </Icon>
            <span className="mt-px [text-orientation:sideways] [writing-mode:vertical-rl]">图库</span>
          </button>
        </div>

        <div className="flex min-w-0 flex-1 flex-col">
          <div className="flex min-h-0 flex-1">
            <PropertyPanel />
            <div className="w-[6px] shrink-0 border-r-2 border-l-2 border-[#e5e5e5] bg-[#d8d8d8]" />
            <main className="flex min-w-0 flex-1 flex-col">
              <DocTabs />
              <div className="min-h-0 flex-1 bg-black">
                <Drawing />
              </div>
              <LayoutTabs />
            </main>
          </div>
          <div className="h-[6px] shrink-0 bg-[#cdcdcd]" />
          <footer className="h-[18px] shrink-0 pl-1 text-[13px] leading-[18px] text-[#444]">命令行</footer>
        </div>
      </div>
    </div>
  );
}
